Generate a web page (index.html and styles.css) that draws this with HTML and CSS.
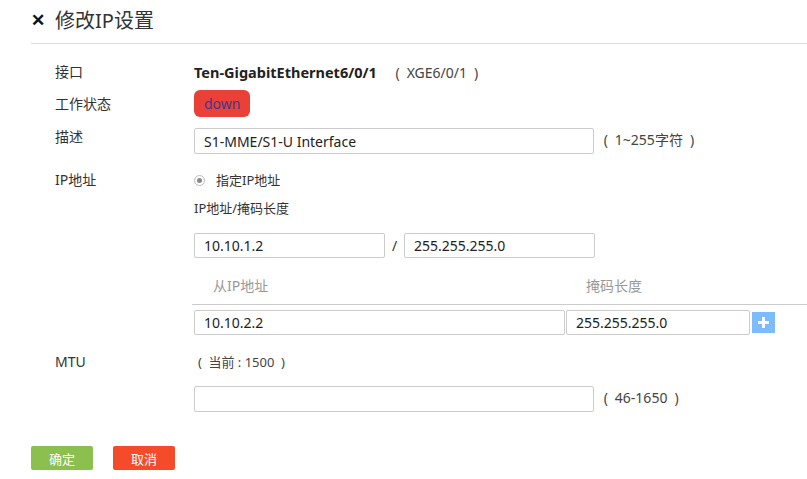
FILE: index.html
```html
<!DOCTYPE html>
<html lang="zh-CN">
<head>
  <meta charset="UTF-8" />
  <title>修改IP设置</title>
  <link rel="stylesheet" href="styles.css">
</head>
<body>
  <div class="header">
    <span class="close">✕</span>
    <h1>修改IP设置</h1>
  </div>

  <div class="form">
    <div class="field row-port">
      <div class="label">接口</div>
      <div class="value">
        <b class="port-name">Ten-GigabitEthernet6/0/1</b>
        <span class="hint port-alias">(&ensp;XGE6/0/1&ensp;)</span>
      </div>
    </div>

    <div class="field row-state">
      <div class="label">工作状态</div>
      <div class="value"><span class="badge">down</span></div>
    </div>

    <div class="field row-desc">
      <div class="label">描述</div>
      <div class="value">
        <input type="text" class="inp inp-wide" value="S1-MME/S1-U Interface" />
        <span class="hint">(&ensp;1~255字符&ensp;)</span>
      </div>
    </div>

    <div class="field row-ip">
      <div class="label">IP地址</div>
      <div class="value">
        <label class="radio"><span class="dot"></span>指定IP地址</label>
        <div class="sub-title">IP地址/掩码长度</div>
        <div class="ip-pair">
          <input type="text" class="inp inp-half" value="10.10.1.2" />
          <span class="slash">/</span>
          <input type="text" class="inp inp-half" value="255.255.255.0" />
        </div>
        <div class="sec-table">
          <div class="sec-head">
            <div class="col-ip">从IP地址</div>
            <div class="col-mask">掩码长度</div>
          </div>
          <div class="sec-row">
            <input type="text" class="inp inp-secip" value="10.10.2.2" />
            <input type="text" class="inp inp-secmask" value="255.255.255.0" />
            <button class="add" type="button">
              <svg width="11" height="11" viewBox="0 0 11 11"><path d="M4 0h3v4h4v3H7v4H4V7H0V4h4z" fill="#fff"/></svg>
            </button>
          </div>
        </div>
      </div>
    </div>

    <div class="field row-mtu">
      <div class="label">MTU</div>
      <div class="value">
        <div class="hint mtu-cur">(&ensp;当前 : 1500&ensp;)</div>
        <div class="mtu-line">
          <input type="text" class="inp inp-wide" value="" />
          <span class="hint">(&ensp;46-1650&ensp;)</span>
        </div>
      </div>
    </div>
  </div>

  <div class="actions">
    <button class="btn ok" type="button">确定</button>
    <button class="btn cancel" type="button">取消</button>
  </div>
</body>
</html>
```

FILE: styles.css
```css
body {
  margin: 0;
  font-family: "Noto Sans", "Noto Sans CJK SC", sans-serif;
  font-size: 14px;
  color: #333;
  background: #fff;
}

.header {
  margin-left: 31px;
  height: 38px;
  padding-bottom: 5px;
  border-bottom: 1px solid #ddd;
  display: flex;
  align-items: center;
}
.close { font-size: 17px; font-weight: bold; width: 24px; color: #111; }
h1 { margin: 0; font-size: 20px; font-weight: normal; color: #333; }

.form { padding: 18px 0 0 55px; }
.field { display: flex; }
.label { width: 139px; flex: none; line-height: 20px; }
.value { flex: 1; }

.row-port { line-height: 20px; }
.port-name { font-weight: bold; font-size: 14.5px; color: #222; }
.port-alias { margin-left: 15px; }
.hint { color: #444; }

.row-state { margin-top: 7px; }
.row-state .label { line-height: 27px; }
.badge {
  display: inline-block;
  height: 27px;
  line-height: 27px;
  padding: 0 10px;
  background: #ea4038;
  color: #3c3c8c;
  border-radius: 6px;
}

.row-desc { margin-top: 11px; }
.row-desc .label { line-height: 20px; margin-top: -1px; }

.inp {
  box-sizing: border-box;
  height: 26px;
  border: 1px solid #ccc;
  border-radius: 2px;
  padding: 0 9px;
  font-family: inherit;
  font-size: 14px;
  color: #222;
  vertical-align: middle;
}
.inp-wide { width: 400px; margin-right: 6px; }
.inp-half { width: 191px; height: 25px; }

.row-ip { margin-top: 16px; }
.radio { display: flex; align-items: center; line-height: 20px; font-size: 13px; }
.dot {
  width: 9px;
  height: 9px;
  border: 1px solid #bbb;
  border-radius: 50%;
  margin-right: 11px;
  position: relative;
}
.dot::after {
  content: "";
  position: absolute;
  left: 2px;
  top: 2px;
  width: 5px;
  height: 5px;
  border-radius: 50%;
  background: #888;
}
.sub-title { margin-top: 8px; line-height: 20px; font-size: 13px; }

.ip-pair { margin-top: 15px; display: flex; align-items: center; }
.slash { width: 19px; text-align: center; }

.sec-table { margin-top: 10px; }
.sec-head {
  display: flex;
  height: 36px;
  line-height: 36px;
  border-bottom: 1px solid #ccc;
  color: #999;
  margin-left: -2px;
}
.col-ip { width: 374px; padding-left: 21px; box-sizing: border-box; }
.col-mask { padding-left: 20px; }
.sec-row { margin-top: 5px; display: flex; align-items: center; }
.inp-secip { width: 371px; height: 25px; }
.inp-secmask { width: 184px; height: 25px; margin-left: 1px; }
.add {
  margin-left: 2px;
  width: 23px;
  height: 21px;
  border: none;
  padding: 0;
  background: #7dbcfb;
  display: flex;
  align-items: center;
  justify-content: center;
}

.row-mtu { margin-top: 17px; }
.mtu-cur { line-height: 20px; font-size: 13px; margin-left: 4px; }
.mtu-line { margin-top: 14px; }

.actions { margin: 34px 0 0 31px; display: flex; gap: 20px; }
.btn {
  width: 62px;
  height: 24px;
  border: none;
  border-radius: 2px;
  color: #fff;
  font-family: inherit;
  font-size: 13px;
  padding: 0;
}
.ok { background: #8bc04f; }
.cancel { background: #f44c2a; }
```
